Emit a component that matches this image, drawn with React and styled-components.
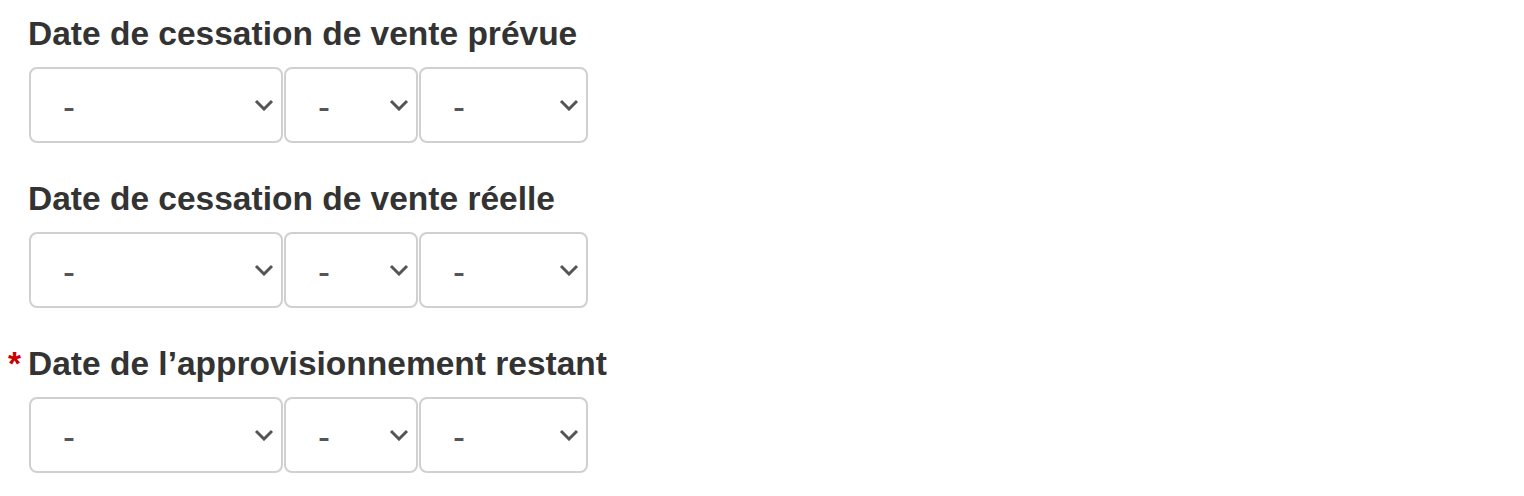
import React from "react";
import styled, { createGlobalStyle } from "styled-components";

const GlobalStyle = createGlobalStyle`
  body {
    margin: 0;
    background: #fff;
    font-family: "Liberation Sans", Arial, sans-serif;
  }
`;

const Form = styled.div`
  padding: 14px 0 0 8px;
  display: flex;
  flex-direction: column;
  gap: 36px;
`;

const Field = styled.div`
  display: flex;
  flex-direction: column;
`;

const Label = styled.div`
  display: flex;
  align-items: baseline;
  font-size: 33.5px;
  line-height: 40px;
  font-weight: bold;
  color: #333;
  margin-bottom: 13px;
`;

const Marker = styled.span`
  width: 20px;
  color: #cc0000;
`;

const Selects = styled.div`
  display: flex;
  gap: 1px;
  padding-left: 21px;
`;

const SelectBox = styled.div`
  box-sizing: border-box;
  width: ${(p) => p.w}px;
  height: 76px;
  border: 2px solid #d0d0d0;
  border-radius: 8px;
  display: flex;
  align-items: center;
  justify-content: space-between;
  padding: 0 7px 0 32px;
  color: #555;
  font-size: 36px;
  line-height: 1;
`;

const Dash = styled.span`
  position: relative;
  top: 2px;
`;

const Chevron = () => (
  <svg width="20" height="12" viewBox="0 0 20 12">
    <path d="M2 2L10 10L18 2" fill="none" stroke="#555" strokeWidth="3" />
  </svg>
);

const Select = ({ w }) => (
  <SelectBox w={w}>
    <Dash>-</Dash>
    <Chevron />
  </SelectBox>
);

const DateField = ({ label, required }) => (
  <Field>
    <Label>
      <Marker>{required ? "*" : ""}</Marker>
      {label}
    </Label>
    <Selects>
      <Select w={254} />
      <Select w={134} />
      <Select w={169} />
    </Selects>
  </Field>
);

export default function App() {
  return (
    <>
      <GlobalStyle />
      <Form>
        <DateField label="Date de cessation de vente prévue" />
        <DateField label="Date de cessation de vente réelle" />
        <DateField label="Date de l’approvisionnement restant" required />
      </Form>
    </>
  );
}
